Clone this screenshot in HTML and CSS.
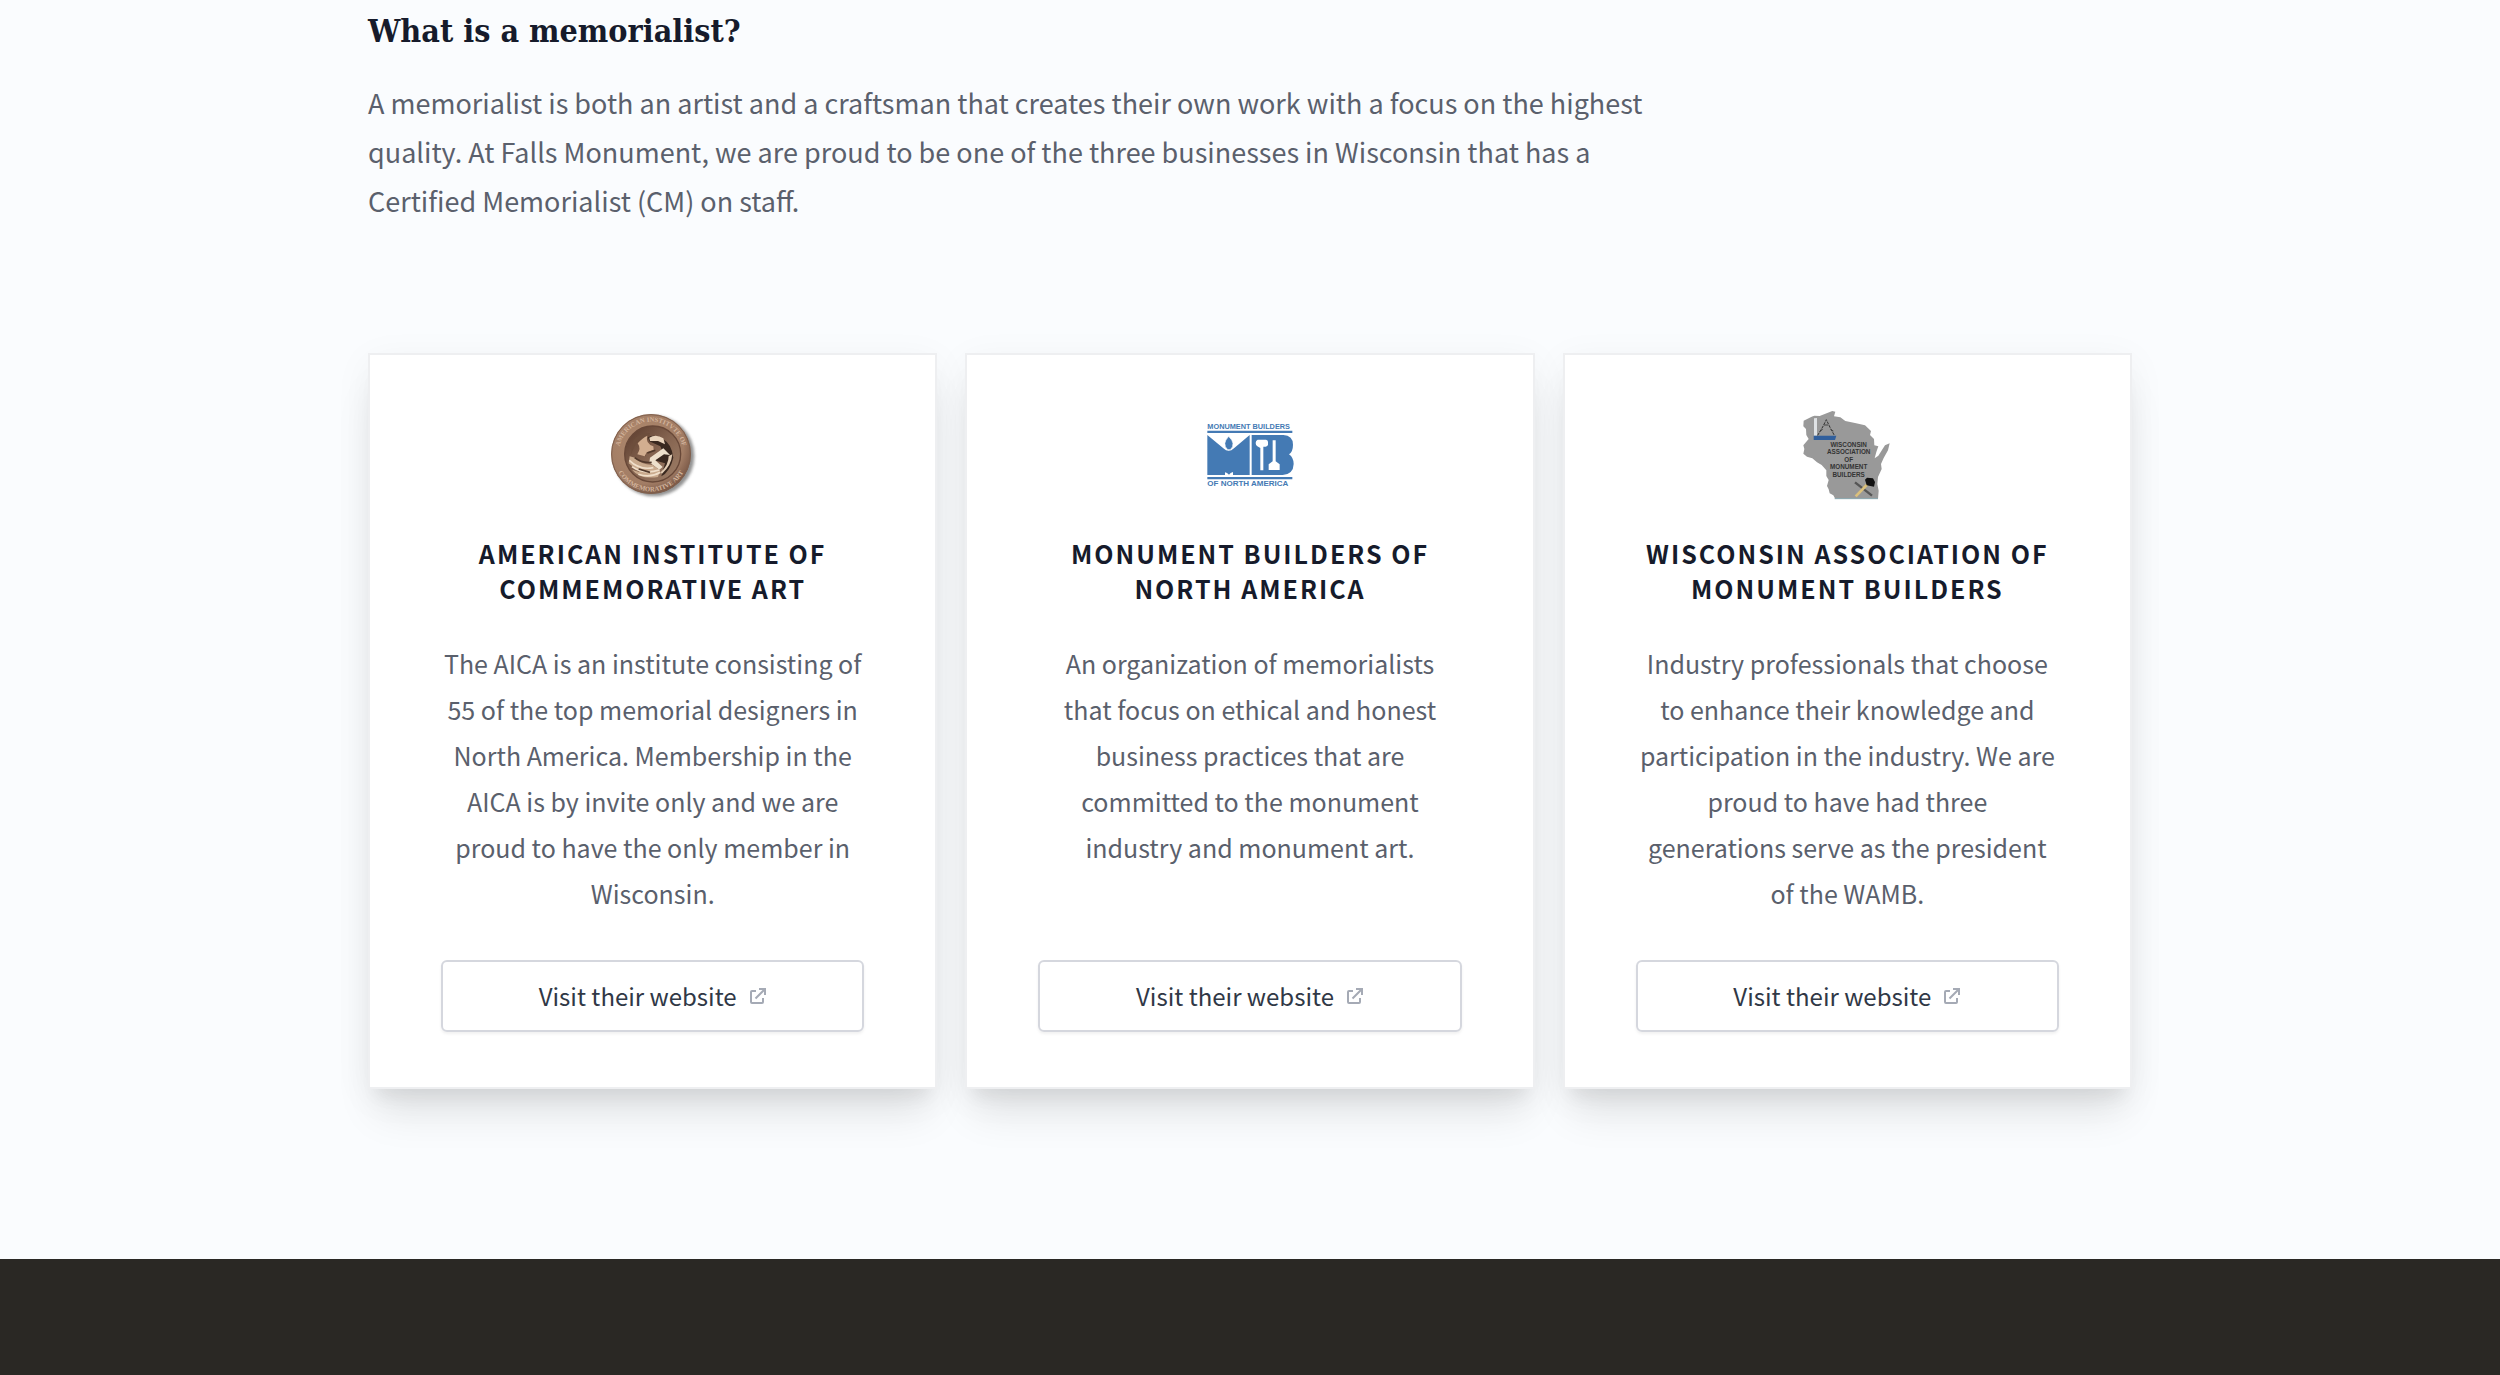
FILE: index.html
```html
<!DOCTYPE html>
<html lang="en">
<head>
<meta charset="utf-8">
<meta name="viewport" content="width=device-width, initial-scale=1">
<title>What is a memorialist?</title>
<link rel="stylesheet" href="styles.css">
</head>
<body>
<svg class="sprite" aria-hidden="true">
  <symbol id="external" viewBox="0 0 18 18">
    <g fill="none" stroke="currentColor" stroke-width="2">
      <path d="M7 4H3Q2 4 2 5V15Q2 16 3 16H13Q14 16 14 15V11"/>
      <path d="M6.500 11.500L15.500 2.500M10 2H16V8"/>
    </g>
  </symbol>
</svg>
<main class="content">
  <section class="intro">
    <h2 class="intro-title">What is a memorialist?</h2>
    <p class="intro-text">A memorialist is both an artist and a craftsman that creates their own work with a focus on the highest quality. At Falls Monument, we are proud to be one of the three businesses in Wisconsin that has a Certified Memorialist (CM) on staff.</p>
  </section>
  <section class="cards">
    <article class="card">
      <svg class="logo" viewBox="54 45 270 270" role="img" aria-label="American Institute of Commemorative Art">
        <defs>
          <radialGradient id="bronze" cx=".42" cy=".38" r=".65"><stop offset="0" stop-color="#b08a6e"/><stop offset=".75" stop-color="#a27d65"/><stop offset="1" stop-color="#765443"/></radialGradient>
          <linearGradient id="bowl" x1="0" y1="0" x2="1" y2="1"><stop offset="0" stop-color="#58392b"/><stop offset=".5" stop-color="#856450"/><stop offset="1" stop-color="#a08069"/></linearGradient>
          <filter id="soft" x="-20%" y="-20%" width="140%" height="140%"><feGaussianBlur stdDeviation="4"/></filter>
          <path id="ring" d="M86 177A97 97 0 0 1 280 177"/>
          <path id="ring-low" d="M71 177A112 112 0 0 0 295 177"/>
        </defs>
        <circle cx="192" cy="183" r="121" fill="#777" opacity=".8" filter="url(#soft)"/>
        <circle cx="183" cy="177" r="120" fill="url(#bronze)"/>
        <circle cx="183" cy="177" r="118" fill="none" stroke="#7f604e" stroke-width="3"/>
        <text class="seal-text"><textPath href="#ring" startOffset="50%">AMERICAN INSTITVTE OF</textPath></text>
        <text class="seal-text"><textPath href="#ring-low" startOffset="50%">COMMEMORATIVE ART</textPath></text>
        <circle cx="188" cy="177" r="84" fill="url(#bowl)" stroke="#684838" stroke-width="4"/>
        <path d="M128 140Q145 112 180 114L172 142Q160 165 168 184L146 178Q152 150 140 140L122 180Z" fill="#6d4e3c"/>
        <path d="M143 145Q158 128 172 122Q165 144 190 154L191 164L170 172L164 184L142 178Q154 160 143 145Z" fill="#d2ae90"/>
        <path d="M174 127Q196 116 218 132Q245 146 250 188Q240 230 214 244L225 205L193 196L220 177L211 154L178 139Z" fill="#39281f"/>
        <path d="M178 128Q198 115 220 130L225 148L204 138L180 138Z" fill="#ead4bc"/>
        <path d="M180 188L220 160L240 180L222 178L196 196L218 216L208 224L178 202Z" fill="#eee0cc"/>
        <path d="M119 184L135 188Q150 207 188 210L210 226L204 246Q150 254 126 224L150 232L116 205Z" fill="#c9aa8d"/>
        <path d="M126 215Q160 240 208 225M118 196Q148 226 190 218M145 238Q180 250 211 232" fill="none" stroke="#f0dfca" stroke-width="5"/>
        <path d="M216 236Q244 212 247 178L236 183Q236 210 212 232Z" fill="#e3cdb5"/>
        <path d="M134 188Q155 205 185 202M146 222L180 232M172 174L196 166" fill="none" stroke="#51392b" stroke-width="5"/>
      </svg>
      <h3 class="card-title">American Institute of Commemorative Art</h3>
      <p class="card-text">The AICA is an institute consisting of 55 of the top memorial designers in North America. Membership in the AICA is by invite only and we are proud to have the only member in Wisconsin.</p>
      <a class="visit" href="#">Visit their website<svg class="visit-icon" aria-hidden="true"><use href="#external"/></svg></a>
    </article>
    <article class="card">
      <svg class="logo" viewBox="63 30 270 270" role="img" aria-label="Monument Builders of North America">
        <g fill="#447ab4">
          <text class="mb-text" x="70" y="87">MONUMENT BUILDERS</text>
          <path d="M70 92H325V99H70ZM70 231H325V238H70Z"/>
          <path d="M70 105L118 145Q134 160 150 145L197 105V225H70Z"/>
          <path d="M134 109Q158 132 139 149H131Q112 132 134 109Z" stroke="#fff" stroke-width="2"/>
          <path d="M203 105H298Q327 107 327 134Q327 155 315 163Q329 173 329 192Q328 223 296 225H203Z"/>
          <text class="mb-text mb-text-low" x="70" y="259">OF NORTH AMERICA</text>
        </g>
        <g fill="#fff">
          <path d="M123 225V217L129 219L135 224L140 219L147 216V225Z"/>
          <path d="M221 119H246Q252 120 252 126V134Q251 139 245 140H238V211H229V144L220 139Q215 136 215 129Q215 121 221 119Z"/>
          <path d="M266 121H275V184L287 193V210H254V193L266 184Z"/>
        </g>
      </svg>
      <h3 class="card-title">Monument Builders of North America</h3>
      <p class="card-text">An organization of memorialists that focus on ethical and honest business practices that are committed to the monument industry and monument art.</p>
      <a class="visit" href="#">Visit their website<svg class="visit-icon" aria-hidden="true"><use href="#external"/></svg></a>
    </article>
    <article class="card">
      <svg class="logo" viewBox="57 45 270 270" role="img" aria-label="Wisconsin Association of Monument Builders">
        <path fill="#999" d="M62 77L86 65L94 62L110 63L148 48L157 50L153 64L172 67L187 78L216 84L246 91L264 108L261 120L273 132L274 151L286 154L280 171L275 190L286 182L306 151L320 145L315 166L302 189L294 207L296 222L285 246L283 267L287 287L285 312H157L151 301L140 295L137 283L132 273L137 255L130 243V226L116 210L102 202L88 190L72 185L61 176L64 162L61 151L77 132L70 120L69 102L61 94Z"/>
        <path d="M285 311H155" stroke="#8cabb4" stroke-width="3"/>
        <path d="M93 122V70L102 69V122Z" fill="#dfe2e5"/>
        <path d="M92 122H160L156 135H92Z" fill="#315f9c"/>
        <path d="M104 121L119 96L130 74L141 97L154 121" fill="none" stroke="#333" stroke-width="3" stroke-dasharray="9 3"/>
        <path d="M110 110L119 103M123 90H135M143 104L151 108" stroke="#444" stroke-width="3"/>
        <g class="wi-text" fill="#333">
          <text x="197" y="155">WISCONSIN</text>
          <text x="197" y="178">ASSOCIATION</text>
          <text x="197" y="200">OF</text>
          <text x="197" y="223">MONUMENT</text>
          <text x="197" y="246">BUILDERS</text>
        </g>
        <path d="M216 262L267 302" stroke="#555" stroke-width="7"/>
        <path d="M218 304L254 267" stroke="#dbc07b" stroke-width="8"/>
        <path d="M246 254L252 248L270 250L276 261L273 275L251 271Z" fill="#111"/>
      </svg>
      <h3 class="card-title">Wisconsin Association of Monument Builders</h3>
      <p class="card-text">Industry professionals that choose to enhance their knowledge and participation in the industry. We are proud to have had three generations serve as the president of the WAMB.</p>
      <a class="visit" href="#">Visit their website<svg class="visit-icon" aria-hidden="true"><use href="#external"/></svg></a>
    </article>
  </section>
</main>
<footer class="footer"></footer>
</body>
</html>
```
FILE: styles.css
```css
* {
  box-sizing: border-box;
}

body {
  margin: 0;
  min-height: 100vh;
  display: flex;
  flex-direction: column;
  background: #fafcfe;
  color: #5a606c;
  font-family: "Noto Sans CJK SC", "Noto Sans", sans-serif;
}

h2,
h3,
p {
  margin: 0;
}

.sprite {
  display: none;
}

.content {
  width: 100%;
  max-width: 1812px;
  margin: 0 auto;
  padding: 8px 24px 170px;
}

.intro {
  max-width: 1300px;
}

.intro-title {
  color: #161b2b;
  font-family: "DejaVu Serif Condensed", "DejaVu Serif", serif;
  font-stretch: condensed;
  font-size: 32px;
  line-height: 46px;
  font-weight: 700;
}

.intro-text {
  margin-top: 24px;
  font-size: 27px;
  line-height: 49px;
}

.cards {
  display: grid;
  grid-template-columns: repeat(3, minmax(0, 1fr));
  gap: 28px;
  margin-top: 128px;
}

.card {
  display: flex;
  flex-direction: column;
  align-items: center;
  padding: 55px 71px;
  border: 2px solid #eeeff1;
  background: #fff;
  box-shadow: 0 32px 40px -8px rgba(0, 0, 0, .09), 0 16px 16px -8px rgba(0, 0, 0, .05), 0 8px 36px rgba(0, 0, 0, .05);
  text-align: center;
}

.logo {
  width: 90px;
  height: 90px;
}

.card-title {
  margin-top: 36px;
  color: #161b2b;
  font-size: 25px;
  line-height: 35px;
  font-weight: 700;
  letter-spacing: 2px;
  text-transform: uppercase;
}

.card-text {
  margin: 34px 0 44px;
  padding: 0 2px;
  font-size: 25px;
  line-height: 46px;
}

.visit {
  display: flex;
  align-items: center;
  justify-content: center;
  gap: 12px;
  width: 100%;
  height: 72px;
  margin-top: auto;
  border: 2px solid #d5d7de;
  border-radius: 6px;
  box-shadow: 0 2px 3px rgba(0, 0, 0, .06);
  color: #303846;
  font-size: 24px;
  line-height: 36px;
  text-decoration: none;
}

.visit-icon {
  width: 18px;
  height: 18px;
  color: #a5aab5;
}

.seal-text {
  fill: #d3b49c;
  font: 700 20px "Liberation Serif", serif;
  text-anchor: middle;
}

.mb-text {
  font: 700 22px "Liberation Sans", sans-serif;
}

.mb-text-low {
  font-size: 24px;
}

.wi-text {
  font: 700 19px "Liberation Sans", sans-serif;
  text-anchor: middle;
}

.footer {
  flex: 1;
  min-height: 116px;
  background: #2a2824;
}
```
